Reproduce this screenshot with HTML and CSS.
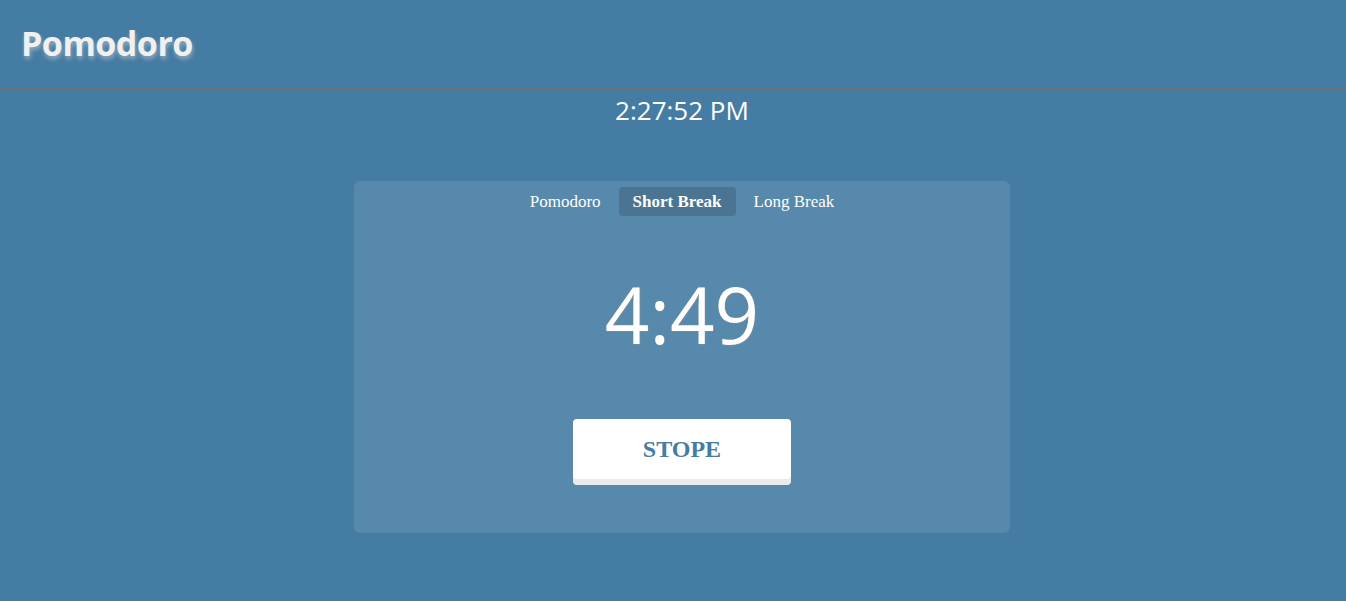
FILE: index.html
```html
<!DOCTYPE html>
<html>
<head>
<meta charset="utf-8">
<link rel="stylesheet" href="styles.css">
</head>
<body>
<header class="top">
  <h1 class="brand">Pomodoro</h1>
</header>
<div class="page">
  <div class="clock">2:27:52 PM</div>
  <main class="card">
    <nav class="tabs">
      <button class="tab">Pomodoro</button>
      <button class="tab active">Short Break</button>
      <button class="tab">Long Break</button>
    </nav>
    <div class="timer">4:49</div>
    <button class="start">STOPE</button>
  </main>
</div>
</body>
</html>
```
FILE: styles.css
```css
html, body {
  margin: 0;
  padding: 0;
}
body {
  background: rgb(69, 124, 163);
  height: 601px;
  overflow: hidden;
  color: #fff;
  font-family: "Open Sans", "Noto Sans", sans-serif;
}
.top {
  height: 88px;
  border-bottom: 2px solid #6a7078;
  display: flex;
  align-items: center;
  padding-left: 21px;
}
.brand {
  margin: 0;
  font-family: "Open Sans", sans-serif;
  font-weight: 700;
  font-size: 34px;
  color: #f0f0f0;
  letter-spacing: -0.5px;
  text-shadow: 1px 3px 4px rgba(210, 210, 210, 0.55);
  padding-bottom: 2px;
}
.page {
  width: 1364px;
}
.clock {
  text-align: center;
  font-size: 26px;
  line-height: 40px;
  color: #fff;
}
.card {
  width: 656px;
  height: 352px;
  margin: 51px auto 0;
  background: rgba(255, 255, 255, 0.1);
  border-radius: 6px;
  display: flex;
  flex-direction: column;
  align-items: center;
  box-sizing: border-box;
  padding-top: 6px;
}
.tabs {
  display: flex;
}
.tab {
  background: none;
  border: none;
  color: #fff;
  font-family: "Liberation Serif", serif;
  font-size: 17px;
  padding: 0 14px;
  height: 29px;
  border-radius: 4px;
  margin: 0 2px;
}
.tab.active {
  background: rgba(0, 0, 0, 0.15);
  font-weight: 700;
}
.timer {
  font-size: 78px;
  line-height: 80px;
  margin-top: 58px;
  color: #fff;
  text-shadow: 1px 1px 1px rgba(180, 140, 120, 0.35);
}
.start {
  margin-top: 65px;
  width: 218px;
  height: 60px;
  background: #fff;
  border: none;
  border-radius: 4px;
  box-shadow: 0 6px 0 rgb(235, 235, 235);
  color: rgb(69, 124, 163);
  font-family: "Liberation Serif", serif;
  font-weight: 700;
  font-size: 24px;
  padding: 0;
}
```
